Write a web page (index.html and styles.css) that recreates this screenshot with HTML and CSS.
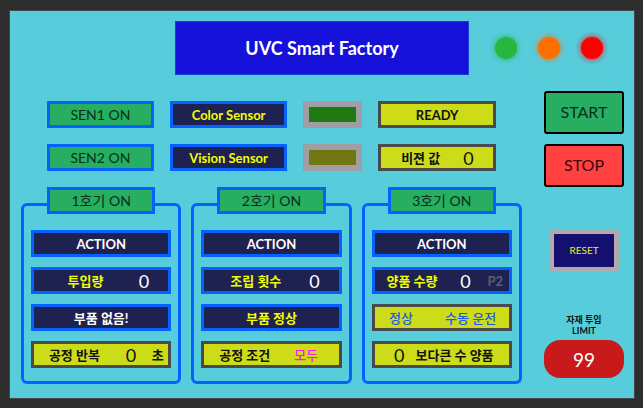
FILE: index.html
```html
<!DOCTYPE html>
<html lang="ko">
<head>
<meta charset="utf-8">
<meta name="viewport" content="width=device-width, initial-scale=1">
<title>UVC Smart Factory</title>
<link rel="stylesheet" href="styles.css">
</head>
<body>
<div class="panel">
  <header class="header">
    <h1 class="title">UVC Smart Factory</h1>
    <div class="lights">
      <span class="light light-green"></span>
      <span class="light light-orange"></span>
      <span class="light light-red"></span>
    </div>
  </header>
  <main class="main">
    <div class="process">
      <div class="sensors">
        <button class="switch" type="button">SEN1 ON</button>
        <div class="box navy lime">Color Sensor</div>
        <div class="lamp lamp-green"></div>
        <div class="box yellow">READY</div>
        <button class="switch" type="button">SEN2 ON</button>
        <div class="box navy lime">Vision Sensor</div>
        <div class="lamp lamp-olive"></div>
        <div class="box yellow split vision"><span>비젼 값</span><output class="num">0</output></div>
      </div>
      <div class="stations">
        <section class="station">
          <button class="switch" type="button">1호기 ON</button>
          <div class="box navy">ACTION</div>
          <div class="box navy split count"><span class="lime">투입량</span><output class="num">0</output></div>
          <div class="box navy">부품 없음!</div>
          <div class="box yellow split repeat"><span>공정 반복</span><output class="num">0</output><span>초</span></div>
        </section>
        <section class="station">
          <button class="switch" type="button">2호기 ON</button>
          <div class="box navy">ACTION</div>
          <div class="box navy split count"><span class="lime">조립 횟수</span><output class="num">0</output></div>
          <div class="box navy lime">부품 정상</div>
          <div class="box yellow split condition"><span>공정 조건</span><span class="magenta">모두</span></div>
        </section>
        <section class="station">
          <button class="switch" type="button">3호기 ON</button>
          <div class="box navy">ACTION</div>
          <div class="box navy split quantity"><span class="lime">양품 수량</span><output class="num">0</output><span class="dim">P2</span></div>
          <div class="box yellow split mode"><span>정상</span><span>수동 운전</span></div>
          <div class="box yellow compare"><output class="num">0</output><span>보다큰 수 양품</span></div>
        </section>
      </div>
    </div>
    <aside class="controls">
      <button class="control start" type="button">START</button>
      <button class="control stop" type="button">STOP</button>
      <button class="reset" type="button">RESET</button>
      <label class="limit-label" for="limit">자재 투입<br>LIMIT</label>
      <input class="limit" id="limit" type="text" inputmode="numeric" value="99">
    </aside>
  </main>
</div>
</body>
</html>
```
FILE: styles.css
```css
* {
  box-sizing: border-box;
}

body {
  margin: 0;
  min-height: 100vh;
  display: flex;
  background: #2d2d2d;
  font-family: Lato, "Noto Sans CJK KR", sans-serif;
  font-size: 13px;
  line-height: 20px;
  color: #111;
}

button,
input {
  margin: 0;
  padding: 0;
  font: inherit;
  color: inherit;
}

button {
  cursor: pointer;
}

.panel {
  flex: 1;
  margin: 11px 9px 10px 10px;
  padding: 10px 0 14px;
  background: #57cddc;
  box-shadow: 0 0 0 1px #44484a;
}

.header {
  display: grid;
  grid-template-columns: 165fr 294fr 26fr 108fr 31fr;
  align-items: center;
}

.title {
  grid-column: 2;
  margin: 0;
  height: 54px;
  background: #1611d8;
  border: 1px solid #1d3cdc;
  color: #fff;
  font-size: 18px;
  line-height: 52px;
  text-align: center;
}

.lights {
  grid-column: 4;
  display: flex;
  justify-content: space-between;
}

.light {
  width: 22px;
  height: 22px;
  border-radius: 50%;
}

.light-green {
  background: #27b73f;
  box-shadow: 0 0 6px #27b73f;
}

.light-orange {
  background: #ff6f00;
  box-shadow: 0 0 6px #ff6f00;
}

.light-red {
  background: #f00;
  box-shadow: 0 0 6px #f00;
}

.main {
  display: grid;
  grid-template-columns: 501fr 80fr;
  column-gap: 22px;
  margin-top: 16px;
  padding: 0 10px 0 11px;
}

.process {
  padding-top: 10px;
}

.sensors {
  display: grid;
  grid-template-columns: 107fr 118fr 59fr 118fr;
  gap: 16px;
  padding: 0 26px;
}

.box,
.switch,
.lamp {
  height: 27px;
  white-space: nowrap;
}

.box {
  display: flex;
  align-items: center;
  justify-content: center;
  border: 3px solid;
  font-weight: bold;
}

.navy {
  background: #1f2150;
  border-color: #0562ff;
  color: #fff;
}

.yellow {
  background: #cddc18;
  border-color: #4a4a4a;
}

.lime {
  color: #f0ff00;
}

.switch {
  background: #27ae60;
  border: 3px solid #0562ff;
  color: #06301b;
  font-size: 14px;
}

.lamp {
  border: 6px solid #a09da5;
}

.lamp-green {
  background: #207a12;
}

.lamp-olive {
  background: #727612;
}

.split {
  display: grid;
  justify-items: center;
}

.num {
  font-size: 18px;
  font-weight: normal;
}

.vision {
  grid-template-columns: 79fr 17fr 16fr;
}

.count {
  grid-template-columns: 102fr 14fr 17fr;
}

.repeat {
  grid-template-columns: 80fr 32fr 21fr;
}

.condition {
  grid-template-columns: 80fr 42fr 11fr;
}

.quantity {
  grid-template-columns: 74fr 32fr 27fr;
}

.mode {
  grid-template-columns: 52fr 76fr;
  column-gap: 5px;
  color: #1f55ea;
  font-weight: 500;
}

.compare {
  gap: 11px;
  padding-left: 4px;
}

.magenta {
  color: #ff10f0;
  font-weight: 500;
}

.dim {
  color: #5d5f70;
}

.stations {
  display: grid;
  grid-template-columns: repeat(3, 1fr);
  gap: 10px;
  margin-top: 32px;
}

.station {
  display: flex;
  flex-direction: column;
  gap: 10px;
  padding: 0 7px 13px;
  border: 3px solid #0562ff;
  border-radius: 6px;
}

.station .switch {
  align-self: center;
  width: 77%;
  margin: -19px 0 6px;
}

.controls {
  display: flex;
  flex-direction: column;
}

.control {
  height: 43px;
  padding-bottom: 2px;
  border: 2px solid #000;
  border-radius: 3px;
  font-size: 16px;
}

.start {
  background: #27ae60;
  color: #06301b;
}

.stop {
  margin-top: 10px;
  background: #ff4141;
  color: #3a0808;
}

.reset {
  height: 43px;
  margin: 42px 5px 0;
  padding-bottom: 2px;
  background: #151070;
  border: 5px solid #b0aaaf;
  border-radius: 4px;
  color: #e6ee20;
  font-size: 10px;
}

.limit-label {
  margin-top: 42px;
  font-size: 9px;
  font-weight: bold;
  line-height: 11px;
  text-align: center;
}

.limit {
  width: 100%;
  height: 38px;
  margin-top: 4px;
  background: #c8191b;
  border: 0;
  border-radius: 16px;
  color: #fff;
  font-size: 19px;
  text-align: center;
}
```
